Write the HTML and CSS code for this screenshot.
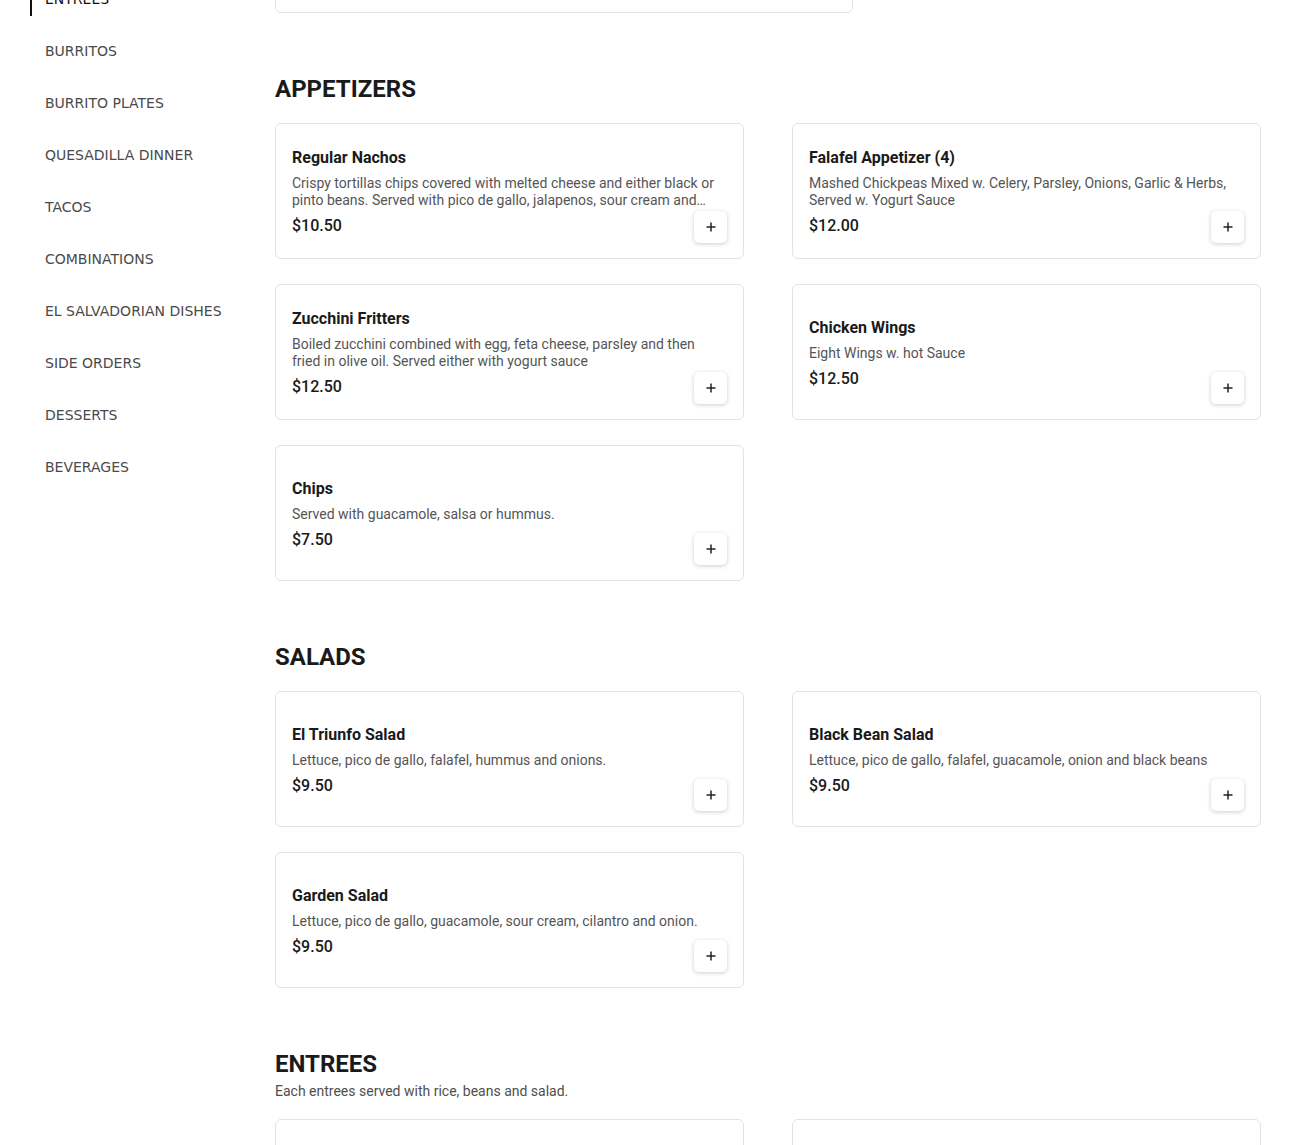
FILE: index.html
```html
<!DOCTYPE html>
<html lang="en">
<head>
  <meta charset="UTF-8" />
  <meta name="viewport" content="width=device-width, initial-scale=1" />
  <title>Menu</title>
  <link rel="stylesheet" href="styles.css">
</head>
<body>
  <div class="page">
    <aside class="sidebar">
      <a class="nav-link active" href="#entrees">ENTREES</a>
      <a class="nav-link" href="#">BURRITOS</a>
      <a class="nav-link" href="#">BURRITO PLATES</a>
      <a class="nav-link" href="#">QUESADILLA DINNER</a>
      <a class="nav-link" href="#">TACOS</a>
      <a class="nav-link" href="#">COMBINATIONS</a>
      <a class="nav-link" href="#">EL SALVADORIAN DISHES</a>
      <a class="nav-link" href="#">SIDE ORDERS</a>
      <a class="nav-link" href="#">DESSERTS</a>
      <a class="nav-link" href="#">BEVERAGES</a>
    </aside>

    <main class="menu">
      <div class="info-box"></div>

      <section class="menu-section" id="appetizers">
        <h2>APPETIZERS</h2>
        <div class="item-grid">
          <div class="item-card">
            <div class="item-text">
              <h3>Regular Nachos</h3>
              <p class="item-desc">Crispy tortillas chips covered with melted cheese and either black or pinto beans. Served with pico de gallo, jalapenos, sour cream and guacamole.</p>
              <div class="item-price">$10.50</div>
            </div>
            <button class="add-btn" aria-label="Add"><svg width="12" height="12" viewBox="0 0 12 12"><path d="M6 1.5v9M1.5 6h9" stroke="#222" stroke-width="1.5"/></svg></button>
          </div>
          <div class="item-card">
            <div class="item-text">
              <h3>Falafel Appetizer (4)</h3>
              <p class="item-desc">Mashed Chickpeas Mixed w. Celery, Parsley, Onions, Garlic &amp; Herbs, Served w. Yogurt Sauce</p>
              <div class="item-price">$12.00</div>
            </div>
            <button class="add-btn" aria-label="Add"><svg width="12" height="12" viewBox="0 0 12 12"><path d="M6 1.5v9M1.5 6h9" stroke="#222" stroke-width="1.5"/></svg></button>
          </div>
          <div class="item-card">
            <div class="item-text">
              <h3>Zucchini Fritters</h3>
              <p class="item-desc">Boiled zucchini combined with egg, feta cheese, parsley and then fried in olive oil. Served either with yogurt sauce</p>
              <div class="item-price">$12.50</div>
            </div>
            <button class="add-btn" aria-label="Add"><svg width="12" height="12" viewBox="0 0 12 12"><path d="M6 1.5v9M1.5 6h9" stroke="#222" stroke-width="1.5"/></svg></button>
          </div>
          <div class="item-card">
            <div class="item-text">
              <h3>Chicken Wings</h3>
              <p class="item-desc">Eight Wings w. hot Sauce</p>
              <div class="item-price">$12.50</div>
            </div>
            <button class="add-btn" aria-label="Add"><svg width="12" height="12" viewBox="0 0 12 12"><path d="M6 1.5v9M1.5 6h9" stroke="#222" stroke-width="1.5"/></svg></button>
          </div>
          <div class="item-card">
            <div class="item-text">
              <h3>Chips</h3>
              <p class="item-desc">Served with guacamole, salsa or hummus.</p>
              <div class="item-price">$7.50</div>
            </div>
            <button class="add-btn" aria-label="Add"><svg width="12" height="12" viewBox="0 0 12 12"><path d="M6 1.5v9M1.5 6h9" stroke="#222" stroke-width="1.5"/></svg></button>
          </div>
        </div>
      </section>

      <section class="menu-section" id="salads">
        <h2>SALADS</h2>
        <div class="item-grid">
          <div class="item-card">
            <div class="item-text">
              <h3>El Triunfo Salad</h3>
              <p class="item-desc">Lettuce, pico de gallo, falafel, hummus and onions.</p>
              <div class="item-price">$9.50</div>
            </div>
            <button class="add-btn" aria-label="Add"><svg width="12" height="12" viewBox="0 0 12 12"><path d="M6 1.5v9M1.5 6h9" stroke="#222" stroke-width="1.5"/></svg></button>
          </div>
          <div class="item-card">
            <div class="item-text">
              <h3>Black Bean Salad</h3>
              <p class="item-desc">Lettuce, pico de gallo, falafel, guacamole, onion and black beans</p>
              <div class="item-price">$9.50</div>
            </div>
            <button class="add-btn" aria-label="Add"><svg width="12" height="12" viewBox="0 0 12 12"><path d="M6 1.5v9M1.5 6h9" stroke="#222" stroke-width="1.5"/></svg></button>
          </div>
          <div class="item-card">
            <div class="item-text">
              <h3>Garden Salad</h3>
              <p class="item-desc">Lettuce, pico de gallo, guacamole, sour cream, cilantro and onion.</p>
              <div class="item-price">$9.50</div>
            </div>
            <button class="add-btn" aria-label="Add"><svg width="12" height="12" viewBox="0 0 12 12"><path d="M6 1.5v9M1.5 6h9" stroke="#222" stroke-width="1.5"/></svg></button>
          </div>
        </div>
      </section>

      <section class="menu-section" id="entrees">
        <h2>ENTREES</h2>
        <p class="section-desc">Each entrees served with rice, beans and salad.</p>
        <div class="item-grid">
          <div class="item-card"></div>
          <div class="item-card"></div>
        </div>
      </section>
    </main>
  </div>
</body>
</html>
```

FILE: styles.css
```css
body {
  margin: 0;
  font-family: Roboto, "Liberation Sans", sans-serif;
  color: #1a1a1a;
  background: #fff;
}
.page {
  display: flex;
  margin-top: -60px;
}
.sidebar {
  width: 275px;
  flex-shrink: 0;
  box-sizing: border-box;
  padding: 33px 0 0 30px;
  display: flex;
  flex-direction: column;
  align-items: flex-start;
}
.nav-link {
  display: block;
  margin: 9px 0;
  padding: 7px 13px;
  line-height: 20px;
  border-left: 2px solid transparent;
  font-family: "DejaVu Sans", sans-serif;
  font-size: 14px;
  color: #4a4a4a;
  text-decoration: none;
}
.nav-link.active {
  border-left-color: #111;
  color: #111;
}
.menu {
  flex: 1;
  padding: 13px 29px 0 0;
  min-width: 0;
}
.info-box {
  width: 578px;
  height: 60px;
  box-sizing: border-box;
  border: 1px solid #e3e3e3;
  border-radius: 6px;
}
.menu-section {
  padding-top: 61px;
}
.menu-section h2 {
  margin: 0 0 19px;
  font-size: 24px;
  line-height: 30px;
  font-weight: 700;
  color: #1a1a1a;
}
.menu-section h2:has(+ .section-desc) {
  margin-bottom: 4px;
}
.section-desc {
  margin: 0 0 19px;
  font-size: 14px;
  line-height: 17px;
  color: #4f4f4f;
}
.item-grid {
  display: grid;
  grid-template-columns: 1fr 1fr;
  column-gap: 48px;
  row-gap: 25px;
}
.item-card {
  position: relative;
  height: 136px;
  box-sizing: border-box;
  padding: 16px;
  border: 1px solid #e3e3e3;
  border-radius: 6px;
  display: flex;
  align-items: center;
}
.item-text {
  width: 100%;
  padding: 2px 8px 0 0;
}
.item-text h3 {
  margin: 0;
  font-size: 16px;
  line-height: 20px;
  font-weight: 700;
  color: #1a1a1a;
}
.item-desc {
  margin: 7px 0;
  font-size: 14px;
  line-height: 17px;
  color: #555;
  display: -webkit-box;
  -webkit-line-clamp: 2;
  -webkit-box-orient: vertical;
  overflow: hidden;
}
.item-price {
  font-size: 16px;
  line-height: 20px;
  font-weight: 500;
  color: #1a1a1a;
}
.add-btn {
  position: absolute;
  right: 16px;
  bottom: 15px;
  width: 33px;
  height: 32px;
  padding: 0;
  border: none;
  border-radius: 5px;
  background: #fff;
  box-shadow: 0 1px 4px rgba(0, 0, 0, 0.2);
  display: flex;
  align-items: center;
  justify-content: center;
  cursor: pointer;
}
```
